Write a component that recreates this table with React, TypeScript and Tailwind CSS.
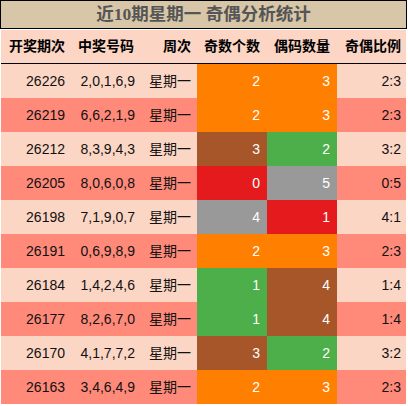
const rows = [
  { no: "26226", nums: "2,0,1,6,9", odd: 2, even: 3, oddBg: "bg-[#ff7f00]", evenBg: "bg-[#ff7f00]" },
  { no: "26219", nums: "6,6,2,1,9", odd: 2, even: 3, oddBg: "bg-[#ff7f00]", evenBg: "bg-[#ff7f00]" },
  { no: "26212", nums: "8,3,9,4,3", odd: 3, even: 2, oddBg: "bg-[#a65628]", evenBg: "bg-[#4daf4a]" },
  { no: "26205", nums: "8,0,6,0,8", odd: 0, even: 5, oddBg: "bg-[#e41a1c]", evenBg: "bg-[#999999]" },
  { no: "26198", nums: "7,1,9,0,7", odd: 4, even: 1, oddBg: "bg-[#999999]", evenBg: "bg-[#e41a1c]" },
  { no: "26191", nums: "0,6,9,8,9", odd: 2, even: 3, oddBg: "bg-[#ff7f00]", evenBg: "bg-[#ff7f00]" },
  { no: "26184", nums: "1,4,2,4,6", odd: 1, even: 4, oddBg: "bg-[#4daf4a]", evenBg: "bg-[#a65628]" },
  { no: "26177", nums: "8,2,6,7,0", odd: 1, even: 4, oddBg: "bg-[#4daf4a]", evenBg: "bg-[#a65628]" },
  { no: "26170", nums: "4,1,7,7,2", odd: 3, even: 2, oddBg: "bg-[#a65628]", evenBg: "bg-[#4daf4a]" },
  { no: "26163", nums: "3,4,6,4,9", odd: 2, even: 3, oddBg: "bg-[#ff7f00]", evenBg: "bg-[#ff7f00]" },
];

const cols = "grid grid-cols-[69px_71px_56px_70px_70px_69px]";

function App() {
  return (
    <div className="w-[408px] h-[406px] bg-white overflow-hidden font-['Liberation_Sans','Noto_Sans_CJK_SC',sans-serif]">
      <div className="w-[407px] h-[29px] border border-black bg-[#d8c6a8] flex items-center justify-center">
        <span className="text-[17.5px] font-bold text-[#555] leading-none font-['Liberation_Serif','Noto_Sans_CJK_SC',sans-serif]">
          近10期星期一 奇偶分析统计
        </span>
      </div>

      <div className="ml-px mt-px w-[405px]">
        <div className={`${cols} h-[34px] bg-[#fcd5c4] border-b border-black text-[14px] font-bold text-black items-center`}>
          <div className="text-right pr-[5px]">开奖期次</div>
          <div className="text-right pr-[7px]">中奖号码</div>
          <div className="text-right pr-[6px]">周次</div>
          <div className="text-right pr-[7px]">奇数个数</div>
          <div className="text-right pr-[7px]">偶码数量</div>
          <div className="text-right pr-[5px]">奇偶比例</div>
        </div>

        {rows.map((r, i) => (
          <div
            key={r.no}
            className={`${cols} h-[34px] text-[14px] text-[#111] ${i % 2 === 0 ? "bg-[#fcd6c4]" : "bg-[#ff8a7a]"}`}
          >
            <div className="flex items-center justify-end pr-[5px]">{r.no}</div>
            <div className="flex items-center justify-end pr-[6px]">{r.nums}</div>
            <div className="flex items-center justify-end pr-[6px]">星期一</div>
            <div className={`flex items-center justify-end pr-[7px] text-white ${r.oddBg}`}>{r.odd}</div>
            <div className={`flex items-center justify-end pr-[7px] text-white ${r.evenBg}`}>{r.even}</div>
            <div className="flex items-center justify-end pr-[5px]">
              {r.odd}:{r.even}
            </div>
          </div>
        ))}
      </div>
    </div>
  );
}

export default App;
